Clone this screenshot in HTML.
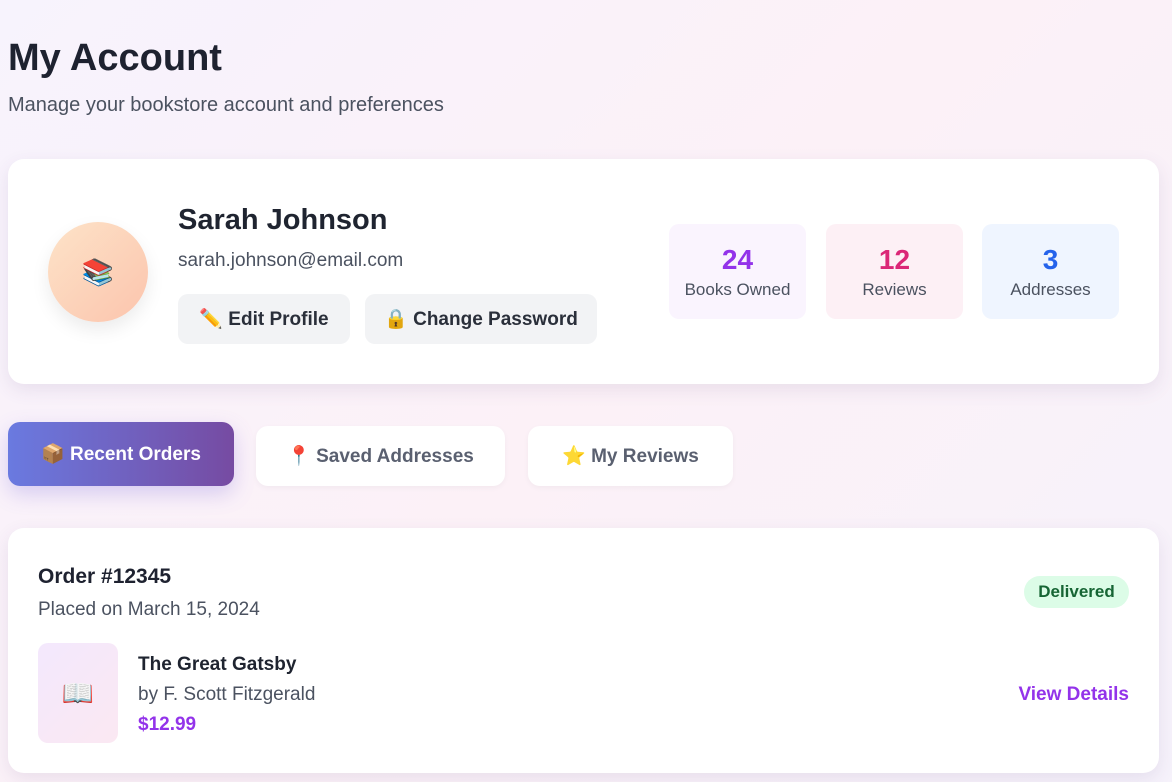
<!DOCTYPE html>
<html><head><meta charset="utf-8"><style>
*{box-sizing:border-box;margin:0;padding:0}
body{width:1172px;height:782px;overflow:hidden;font-family:"Liberation Sans",sans-serif;background:linear-gradient(135deg,#f7f3fd 0%,#fcf1f7 50%,#f6f2fb 100%);color:#1f2430;position:relative}
h1{position:absolute;left:8px;top:37px;font-size:38px;font-weight:700;color:#1e2230}
.sub{position:absolute;left:8px;top:94px;font-size:20px;color:#4b5260}
.card{position:absolute;background:#fff;border-radius:16px;box-shadow:0 6px 18px rgba(80,60,120,.10)}
.avatar{position:absolute;left:40px;top:63px;width:100px;height:100px;border-radius:50%;background:linear-gradient(135deg,#fde3c8,#fcc4ad);box-shadow:0 8px 18px rgba(0,0,0,.08);display:flex;align-items:center;justify-content:center;font-size:26px}
.btn{position:absolute;top:135px;height:50px;background:#f2f3f5;border-radius:10px;font-size:19px;font-weight:700;color:#2a2f3a;display:flex;align-items:center;justify-content:center;gap:10px}
.stat{position:absolute;top:65px;width:137px;height:95px;border-radius:10px;text-align:center}
.stat b{display:block;font-size:28px;margin-top:20px;line-height:32px}
.stat span{display:block;font-size:17px;color:#4b5260;margin-top:4px}
.tab{position:absolute;height:60px;border-radius:12px;background:#fff;font-size:19px;font-weight:700;color:#5a6070;display:flex;align-items:center;justify-content:center;gap:16px}
</style></head><body>
<h1>My Account</h1>
<div class="sub">Manage your bookstore account and preferences</div>
<div class="card" style="left:8px;top:159px;width:1151px;height:225px">
  <div class="avatar">📚</div>
  <div style="position:absolute;left:170px;top:45px;font-size:29px;font-weight:700">Sarah Johnson</div>
  <div style="position:absolute;left:170px;top:91px;font-size:19px;color:#4b5260">sarah.johnson@email.com</div>
  <div class="btn" style="left:170px;width:172px">✏️ Edit Profile</div>
  <div class="btn" style="left:357px;width:232px">🔒 Change Password</div>
  <div class="stat" style="left:661px;background:#faf4fe"><b style="color:#9333ea">24</b><span>Books Owned</span></div>
  <div class="stat" style="left:818px;background:#fdf0f5"><b style="color:#db2777">12</b><span>Reviews</span></div>
  <div class="stat" style="left:974px;background:#eff5ff"><b style="color:#2563eb">3</b><span>Addresses</span></div>
</div>
<div class="tab" style="left:8px;top:422px;width:226px;height:64px;background:linear-gradient(90deg,#6a7ae0,#764ba2);color:#fff;box-shadow:0 8px 20px rgba(110,90,220,.25)">📦 Recent Orders</div>
<div class="tab" style="left:256px;top:426px;width:249px;box-shadow:0 2px 6px rgba(0,0,0,.04)">📍 Saved Addresses</div>
<div class="tab" style="left:528px;top:426px;width:205px;box-shadow:0 2px 6px rgba(0,0,0,.04)">⭐ My Reviews</div>
<div class="card" style="left:8px;top:528px;width:1151px;height:245px">
  <div style="position:absolute;left:30px;top:37px;font-size:21px;font-weight:700;color:#1e2230">Order #12345</div>
  <div style="position:absolute;left:30px;top:71px;font-size:19px;color:#4b5260">Placed on March 15, 2024</div>
  <div style="position:absolute;right:30px;top:48px;width:105px;height:32px;border-radius:16px;background:#dcfce7;color:#166534;font-size:17px;font-weight:700;display:flex;align-items:center;justify-content:center">Delivered</div>
  <div style="position:absolute;left:30px;top:115px;width:80px;height:100px;border-radius:10px;background:linear-gradient(135deg,#f3e8fd,#fbe8f2);display:flex;align-items:center;justify-content:center;font-size:26px">📖</div>
  <div style="position:absolute;left:130px;top:126px;font-size:19px;font-weight:700">The Great Gatsby</div>
  <div style="position:absolute;left:130px;top:156px;font-size:19px;color:#4b5260">by F. Scott Fitzgerald</div>
  <div style="position:absolute;left:130px;top:186px;font-size:19px;font-weight:700;color:#9333ea">$12.99</div>
  <div style="position:absolute;right:30px;top:156px;font-size:19px;font-weight:700;color:#9333ea">View Details</div>
</div>
</body></html>
